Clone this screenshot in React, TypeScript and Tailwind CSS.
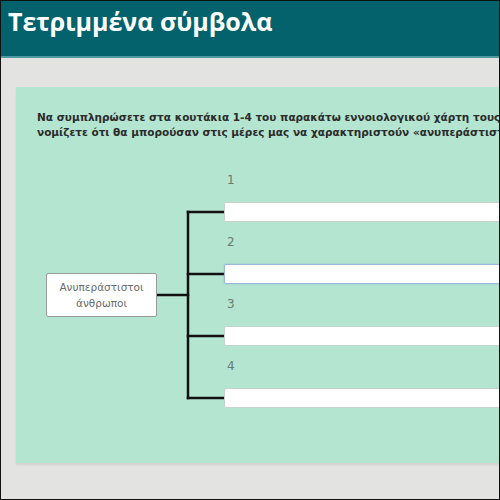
import React from "react";

export default function App() {
  const rows = ["1", "2", "3", "4"];
  return (
    <div className="w-[500px] h-[500px] border border-[#111] overflow-hidden bg-[#e3e3e1] box-border" style={{ fontFamily: '"DejaVu Sans", Verdana, sans-serif' }}>
      <div className="h-[57px] bg-[#03626b] border-b-2 border-[#4f9aa0] flex items-start pl-[7px] pt-[5px]">
        <h1 className="text-white text-[25px] font-bold leading-[30px] whitespace-nowrap" style={{ fontFamily: '"Open Sans", "Noto Sans", sans-serif' }}>
          Τετριμμένα σύμβολα
        </h1>
      </div>
      <div className="pt-[29px] pl-[15px]">
        <div className="w-[560px] h-[376px] bg-[#b4e5d0] shadow-[0_2px_2px_rgba(0,0,0,0.08)] pt-[23px] pl-[21px]">
          <p className="text-[10.5px] leading-[15px] font-bold text-[#2b2b2b] whitespace-nowrap">
            Να συμπληρώσετε στα κουτάκια 1-4 του παρακάτω εννοιολογικού χάρτη τους ανθρώπους που
            <br />
            νομίζετε ότι θα μπορούσαν στις μέρες μας να χαρακτηριστούν «ανυπεράστιστοι».
          </p>
          <div className="flex items-start mt-[31px] ml-[9px]">
            <div className="mt-[102px] w-[111px] h-[44px] bg-white border border-[#9a9a9a] rounded-[2px] flex flex-col items-center justify-center text-[10.5px] leading-[16px] text-[#6b6b6b]">
              <span>Ανυπεράστιστοι</span>
              <span>άνθρωποι</span>
            </div>
            <svg width="67" height="237" className="shrink-0">
              <g stroke="#111" strokeWidth="2.5" fill="none" strokeLinecap="square">
                <line x1="0" y1="124" x2="31" y2="124" />
                <line x1="31" y1="41" x2="31" y2="227" />
                <line x1="31" y1="41" x2="67" y2="41" />
                <line x1="31" y1="103" x2="67" y2="103" />
                <line x1="31" y1="165" x2="67" y2="165" />
                <line x1="31" y1="227" x2="67" y2="227" />
              </g>
            </svg>
            <div className="flex flex-col gap-[11px]">
              {rows.map((n) => (
                <div key={n} className="flex flex-col">
                  <div className="h-[31px] pt-[2px] pl-[3px] text-[12px] leading-[14px] text-[#6b7a72]">{n}</div>
                  <input
                    type="text"
                    className={
                      n === "2"
                        ? "w-[320px] h-[20px] bg-white rounded-[2px] border border-[#9bb8da] outline-none shadow-[0_0_2px_rgba(90,140,210,0.4)]"
                        : "w-[320px] h-[20px] bg-white rounded-[2px] border border-[#c9d3ce] outline-none"
                    }
                  />
                </div>
              ))}
            </div>
          </div>
        </div>
      </div>
    </div>
  );
}
